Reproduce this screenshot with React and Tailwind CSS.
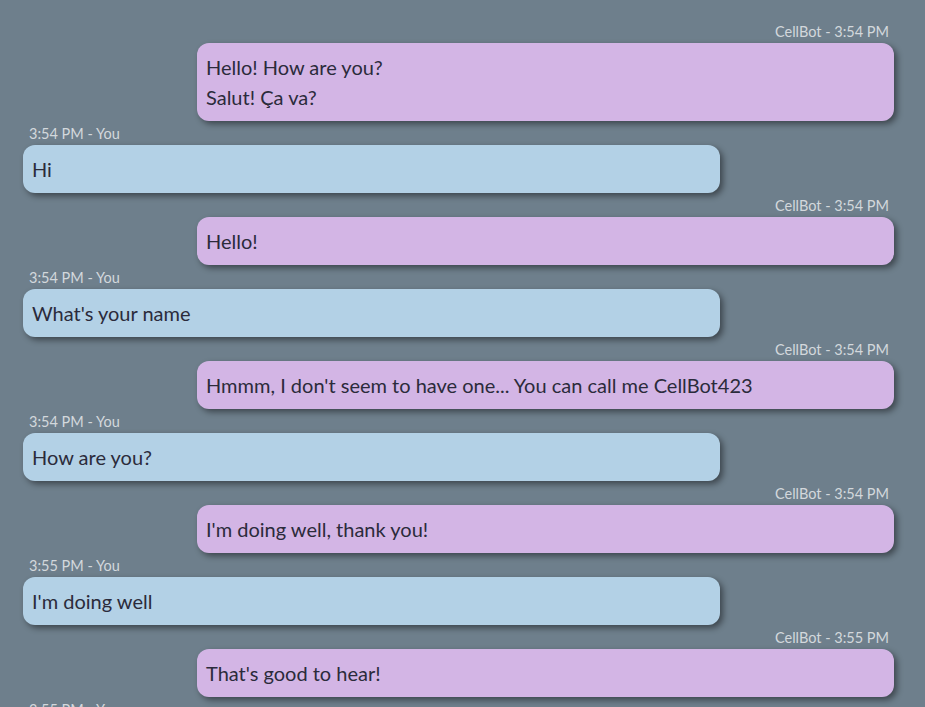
import React from "react";

const messages = [
  { from: "bot", time: "3:54 PM", lines: ["Hello! How are you?", "Salut! Ça va?"] },
  { from: "you", time: "3:54 PM", lines: ["Hi"] },
  { from: "bot", time: "3:54 PM", lines: ["Hello!"] },
  { from: "you", time: "3:54 PM", lines: ["What's your name"] },
  { from: "bot", time: "3:54 PM", lines: ["Hmmm, I don't seem to have one... You can call me CellBot423"] },
  { from: "you", time: "3:54 PM", lines: ["How are you?"] },
  { from: "bot", time: "3:54 PM", lines: ["I'm doing well, thank you!"] },
  { from: "you", time: "3:55 PM", lines: ["I'm doing well"] },
  { from: "bot", time: "3:55 PM", lines: ["That's good to hear!"] },
  { from: "you", time: "3:55 PM", lines: ["Nice"] },
];

function Message({ m }) {
  const bot = m.from === "bot";
  return (
    <div className={bot ? "flex flex-col items-end" : "flex flex-col items-start"}>
      <div
        className={
          "pt-[2px] text-[14.5px] leading-[22px] text-[#d3d8dc] " +
          (bot ? "pr-[5px]" : "pl-[6px]")
        }
      >
        {bot ? `CellBot - ${m.time}` : `${m.time} - You`}
      </div>
      <div
        className={
          "w-[697px] rounded-[12px] px-[9px] py-[9px] text-[20px] leading-[30px] text-[#2b2b3b] shadow-[3px_3px_6px_rgba(0,0,0,0.45)] " +
          (bot ? "bg-[#d3b5e5]" : "bg-[#b3d1e6]")
        }
      >
        {m.lines.map((l, i) => (
          <div key={i}>{l}</div>
        ))}
      </div>
    </div>
  );
}

export default function App() {
  return (
    <div className="h-[707px] overflow-hidden bg-[#6e7f8c] pt-[19px] pl-[23px] pr-[31px] font-['Lato',sans-serif]">
      <div className="flex flex-col">
        {messages.map((m, i) => (
          <Message key={i} m={m} />
        ))}
      </div>
    </div>
  );
}
